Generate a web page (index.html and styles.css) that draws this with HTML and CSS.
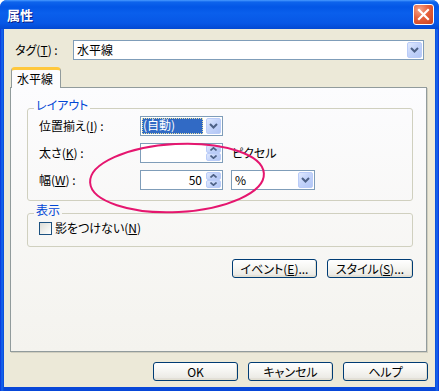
FILE: index.html
```html
<!DOCTYPE html>
<html lang="ja">
<head>
<meta charset="utf-8">
<title>属性</title>
<link rel="stylesheet" href="styles.css">
</head>
<body>
<div class="window">
  <div class="titlebar">
    <span class="title">属性</span>
    <span class="close"><svg width="19" height="19" viewBox="0 0 19 19"><path d="M5 5 L14 14 M14 5 L5 14" stroke="#fff" stroke-width="2.2" stroke-linecap="square"/></svg></span>
  </div>
  <div class="client">
    <div class="tagrow">
      <span class="taglabel">タグ(<u>T</u>) :</span>
      <div class="combo wide"><span class="value">水平線</span><span class="dd"><svg width="9" height="6" viewBox="0 0 9 6"><path d="M1 1 L4.5 4.5 L8 1" fill="none" stroke="#4D6185" stroke-width="2"/></svg></span></div>
    </div>
    <div class="tabs"><div class="tab">水平線</div></div>
    <div class="panel">
      <fieldset class="group layout">
        <legend>レイアウト</legend>
        <div class="row">
          <span class="lbl">位置揃え(<u>I</u>) :</span>
          <div class="combo small"><span class="sel">(自動)</span><span class="dd"><svg width="9" height="6" viewBox="0 0 9 6"><path d="M1 1 L4.5 4.5 L8 1" fill="none" stroke="#4D6185" stroke-width="2"/></svg></span></div>
        </div>
        <div class="row">
          <span class="lbl">太さ(<u>K</u>) :</span>
          <div class="spin"><span class="val"></span><span class="spinbtns"><span class="sb"><svg width="7" height="4" viewBox="0 0 7 4"><path d="M0.5 3.5 L3.5 0.8 L6.5 3.5" fill="none" stroke="#4D6185" stroke-width="1.6"/></svg></span><span class="sb"><svg width="7" height="4" viewBox="0 0 7 4"><path d="M0.5 0.5 L3.5 3.2 L6.5 0.5" fill="none" stroke="#4D6185" stroke-width="1.6"/></svg></span></span></div>
          <span class="unit">ピクセル</span>
        </div>
        <div class="row">
          <span class="lbl">幅(<u>W</u>) :</span>
          <div class="spin"><span class="val">50</span><span class="spinbtns"><span class="sb"><svg width="7" height="4" viewBox="0 0 7 4"><path d="M0.5 3.5 L3.5 0.8 L6.5 3.5" fill="none" stroke="#4D6185" stroke-width="1.6"/></svg></span><span class="sb"><svg width="7" height="4" viewBox="0 0 7 4"><path d="M0.5 0.5 L3.5 3.2 L6.5 0.5" fill="none" stroke="#4D6185" stroke-width="1.6"/></svg></span></span></div>
          <div class="combo pct"><span class="value">%</span><span class="dd"><svg width="9" height="6" viewBox="0 0 9 6"><path d="M1 1 L4.5 4.5 L8 1" fill="none" stroke="#4D6185" stroke-width="2"/></svg></span></div>
        </div>
      </fieldset>
      <fieldset class="group display">
        <legend>表示</legend>
        <div class="check"><span class="box"></span><span>影をつけない(<u>N</u>)</span></div>
      </fieldset>
      <div class="btnrow inner">
        <span class="btn">イベント(<u>E</u>)...</span>
        <span class="btn wide">スタイル(<u>S</u>)...</span>
      </div>
    </div>
    <div class="btnrow bottom">
      <span class="btn">OK</span>
      <span class="btn">キャンセル</span>
      <span class="btn">ヘルプ</span>
    </div>
  </div>
  <svg class="mark" width="439" height="391" viewBox="0 0 439 391"><ellipse cx="177" cy="178" rx="87" ry="34" transform="rotate(-3 177 178)" fill="none" stroke="#E5166F" stroke-width="2"/></svg>
</div>
</body>
</html>
```
FILE: styles.css
```css
* { box-sizing: border-box; }
html, body { margin: 0; padding: 0; background: #ffffff; }
body {
  font-family: "Noto Sans CJK JP", "MS UI Gothic", sans-serif;
  font-size: 12px;
  line-height: 14px;
  color: #000;
  font-feature-settings: "palt" 1;
}
u { text-decoration: underline; text-underline-offset: 1px; }

.window {
  position: relative;
  width: 439px;
  height: 391px;
  display: flex;
  flex-direction: column;
  background: linear-gradient(to right, #0831D9 0, #166AEE 2px, #0847D8 4px, #0847D8 435px, #166AEE 437px, #0831D9 439px);
  border-radius: 7px 7px 0 0;
  overflow: hidden;
}

.titlebar {
  height: 29px;
  flex: none;
  display: flex;
  align-items: center;
  justify-content: space-between;
  padding: 0 5px 0 7px;
  background: linear-gradient(#4A9BFF 0, #0E64EC 2px, #0356E6 7px, #0A5FEC 45%, #0757E6 80%, #0348D2 100%);
}
.title {
  color: #fff;
  font-weight: bold;
  font-size: 13px;
  line-height: 16px;
  text-shadow: 1px 1px #0A1A80;
}
.close {
  width: 21px;
  height: 21px;
  border: 1px solid #fff;
  border-radius: 3px;
  background: radial-gradient(circle at 30% 25%, #F6A58A 0, #E5603C 45%, #C9401E 100%);
  display: flex;
  align-items: center;
  justify-content: center;
}

.client {
  flex: 1;
  margin: 0 4px 4px;
  background: #ECE9D8;
  display: flex;
  flex-direction: column;
  padding: 11px 7px 6px 6px;
}

.tagrow {
  display: flex;
  align-items: center;
  height: 20px;
  padding-left: 5px;
}
.taglabel { width: 58px; }

.combo {
  display: flex;
  align-items: stretch;
  height: 20px;
  border: 1px solid #7F9DB9;
  background: #fff;
  padding: 1px;
}
.combo.wide { width: 351px; }
.combo.small { width: 83px; }
.combo.pct { width: 84px; margin-left: 8px; }
.combo .value { flex: 1; padding-left: 2px; line-height: 16px; }
.dd {
  width: 15px;
  flex: none;
  border: 1px solid #BACCF8;
  border-radius: 2px;
  background: linear-gradient(135deg, #E1EAFE 0, #C4D4FA 45%, #B2C6F5 100%);
  display: flex;
  align-items: center;
  justify-content: center;
}
.sel {
  flex: 1;
  margin-right: 3px;
  background: #316AC5;
  color: #fff;
  line-height: 14px;
  outline: 1px dotted #E8E0A0;
  outline-offset: -1px;
  padding-left: 1px;
}

.tabs {
  margin-top: 7px;
  height: 21px;
  display: flex;
  padding-left: 1px;
}
.tab {
  position: relative;
  z-index: 1;
  width: 50px;
  height: 21px;
  border: 1px solid #919B9C;
  border-top: 3px solid #FFC83C;
  border-bottom: none;
  border-radius: 4px 4px 0 0;
  background: #FCFCFE;
  padding: 2px 0 0 5px;
  line-height: 14px;
}

.panel {
  flex: 1;
  margin-top: -1px;
  margin-right: 1px;
  border: 1px solid #919B9C;
  box-shadow: 1px 1px 0 #D0CEBF;
  background: linear-gradient(#FCFCFE, #F4F3EE);
  padding: 12px 13px 0 16px;
  display: flex;
  flex-direction: column;
}

.group {
  margin: 0;
  min-width: 0;
  border: 1px solid #D0D0BF;
  border-radius: 3px;
  padding: 0 10px 10px 11px;
}
.group legend {
  color: #0046D5;
  line-height: 10px;
  padding: 0 2px 6px;
  margin-left: -5px;
}
.display { margin-top: 4px; padding-bottom: 11px; }

.row {
  display: flex;
  align-items: center;
  height: 20px;
}
.row + .row { margin-top: 7px; }
.lbl { width: 101px; }
.unit { margin-left: 9px; }

.spin {
  display: flex;
  width: 83px;
  height: 20px;
  border: 1px solid #7F9DB9;
  background: #fff;
  padding: 1px;
}
.spin .val {
  flex: 1;
  text-align: right;
  padding-right: 4px;
  line-height: 16px;
}
.spinbtns {
  width: 15px;
  display: flex;
  flex-direction: column;
  gap: 0;
}
.sb {
  flex: 1;
  border: 1px solid #BACCF8;
  border-radius: 2px;
  background: linear-gradient(135deg, #E1EAFE 0, #C4D4FA 45%, #B2C6F5 100%);
  display: flex;
  align-items: center;
  justify-content: center;
}

.check {
  display: flex;
  align-items: center;
  height: 14px;
}
.box {
  width: 13px;
  height: 13px;
  border: 1px solid #1C5180;
  background: linear-gradient(135deg, #DCDCD7 0, #F2F2EE 60%, #FFFFFF 100%);
  margin-right: 3px;
}

.btnrow {
  display: flex;
  justify-content: flex-end;
  gap: 10px;
}
.btnrow.inner { margin-top: 12px; }
.btnrow.bottom { margin-top: 10px; }
.btn {
  width: 85px;
  height: 19px;
  border: 1px solid #003C74;
  border-radius: 3px;
  background: linear-gradient(#FFFFFF 0, #F7F7F4 40%, #ECEBE6 85%, #D6D0C5 100%);
  box-shadow: inset -1px -1px 0 #E3E0D2;
  display: flex;
  align-items: center;
  justify-content: center;
  line-height: 14px;
}
.btn.wide { width: 86px; }

.mark {
  position: absolute;
  left: 0;
  top: 0;
  pointer-events: none;
}
```
